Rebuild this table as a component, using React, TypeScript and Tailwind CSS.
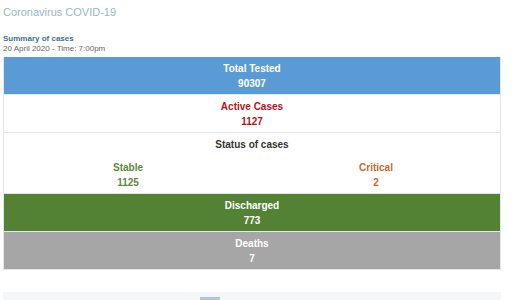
import React from 'react';

type Row = {
  label: string;
  value: string;
  className: string;
};

const rows: Row[] = [
  { label: 'Total Tested', value: '90307', className: 'bg-[#5b9bd5] text-white' },
  { label: 'Active Cases', value: '1127', className: 'bg-white text-[#b5121b]' },
];

const tail: Row[] = [
  { label: 'Discharged', value: '773', className: 'bg-[#548235] text-white' },
  { label: 'Deaths', value: '7', className: 'bg-[#a6a6a6] text-white' },
];

function StatRow({ row }: { row: Row }) {
  return (
    <div className={`border-b border-[#e3e6ea] pt-[4px] pb-[3px] text-center font-bold leading-[15px] ${row.className}`}>
      <div>{row.label}</div>
      <div>{row.value}</div>
    </div>
  );
}

export default function App() {
  return (
    <div className="h-[300px] w-[521px] overflow-hidden bg-white font-['Liberation_Sans',Arial,sans-serif] text-[10px]">
      <div className="w-[498px] pl-[3px]">
        <h1 className="pt-[4px] text-[11px] leading-[16px] text-[#93b8cc]">Coronavirus COVID-19</h1>

        <p className="mt-[14px] text-[8px] font-bold leading-[10px] text-[#3a6f99]">Summary of cases</p>
        <p className="text-[8px] leading-[10px] text-[#666]">20 April 2020 - Time: 7:00pm</p>
      </div>

      <div className="ml-[3px] mt-[3px] w-[498px] border-x border-[#e3e6ea]">
        {rows.map(r => (
          <StatRow key={r.label} row={r} />
        ))}

        {/* Stable / critical split */}
        <div className="border-b border-[#e3e6ea] bg-white pt-[4px] pb-[3px] text-center font-bold">
          <div className="leading-[15px] text-[#333]">Status of cases</div>
          <div className="mt-[8px] grid grid-cols-2 leading-[15px]">
            <div className="text-[#5a8a3c]">
              <div>Stable</div>
              <div>1125</div>
            </div>
            <div className="text-[#c5692b]">
              <div>Critical</div>
              <div>2</div>
            </div>
          </div>
        </div>

        {tail.map(r => (
          <StatRow key={r.label} row={r} />
        ))}
      </div>

      {/* Footer strip */}
      <div className="ml-[3px] mt-[22px] flex h-[10px] w-[498px] bg-[#f5f6f7] pl-[197px]">
        <div className="mt-[5px] h-[5px] w-[20px] bg-[#a9c9de]" />
      </div>
    </div>
  );
}
